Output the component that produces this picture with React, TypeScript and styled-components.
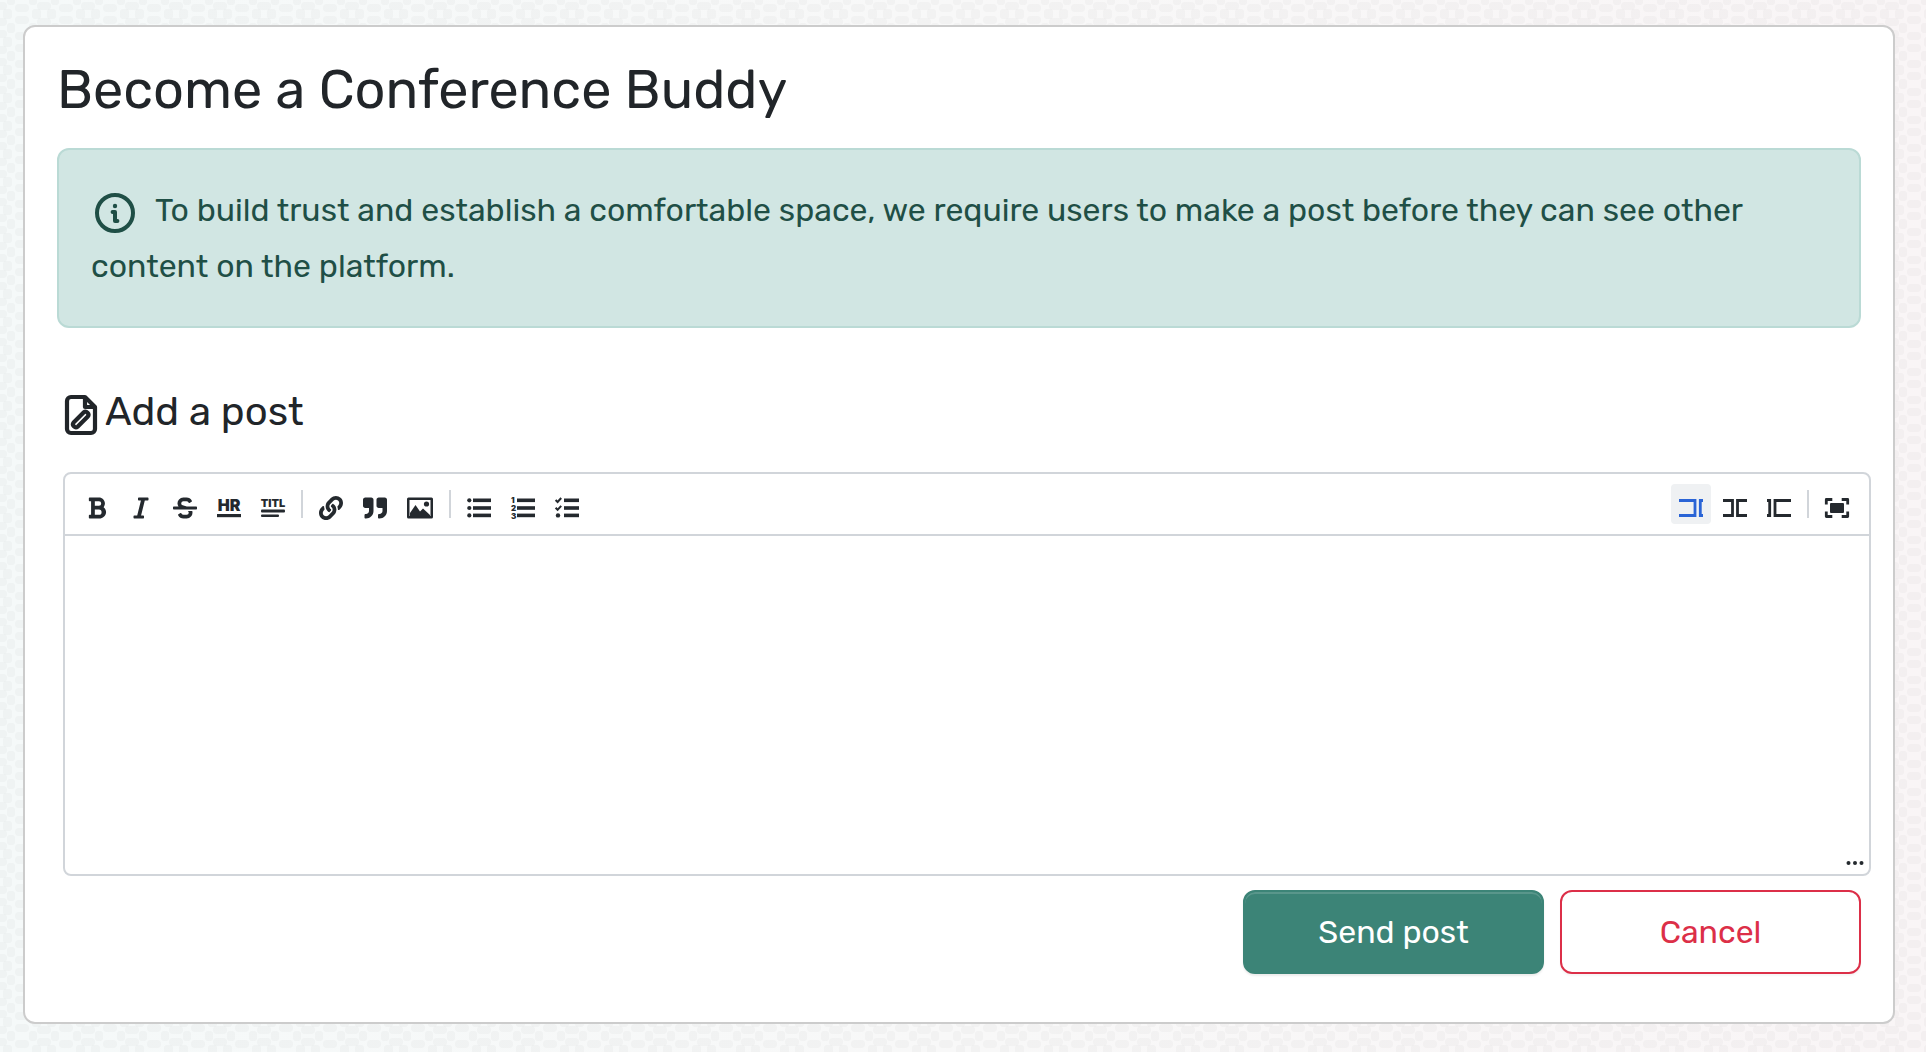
import React from "react";
import styled, { createGlobalStyle } from "styled-components";
import { FaBold, FaItalic, FaStrikethrough, FaLink, FaQuoteRight } from "react-icons/fa";

const ink = "#24292e";
const line = "#d1d5da";

const tile = encodeURIComponent(
  `<svg xmlns="http://www.w3.org/2000/svg" width="44" height="28" viewBox="0 0 44 28"><g fill="#302020" fill-opacity=".026"><rect x="15" y="4" width="14" height="8" rx="4"/><rect x="15" y="16" width="14" height="8" rx="4"/><rect x="-7" y="2" width="14" height="8" rx="4"/><rect x="37" y="2" width="14" height="8" rx="4"/><rect x="-7" y="18" width="14" height="8" rx="4"/><rect x="37" y="18" width="14" height="8" rx="4"/><rect x="3" y="9" width="9" height="10" rx="3"/><rect x="32" y="9" width="9" height="10" rx="3"/><rect x="7" y="-4" width="8" height="9" rx="3"/><rect x="7" y="23" width="8" height="9" rx="3"/><rect x="29" y="-4" width="8" height="9" rx="3"/><rect x="29" y="23" width="8" height="9" rx="3"/></g></svg>`
);

const GlobalStyle = createGlobalStyle`
  *, *::before, *::after { box-sizing: border-box; }
  body {
    margin: 0;
    min-height: 100vh;
    font-family: Rubik, Roboto, "Liberation Sans", sans-serif;
    color: #212529;
    background: url("data:image/svg+xml,${tile}"), linear-gradient(90deg, #f5f9f9, #f8f8f8 50%, #f9f5f6);
  }
  button, textarea { font: inherit; }
`;

const Card = styled.main`
  margin: 25px 31px 28px 23px;
  padding: 29px 32px 48px;
  background: #fff;
  border: 2px solid #ccc;
  border-radius: 12px;
`;

const Title = styled.h1`
  margin: 0 0 24px;
  font-size: 54px;
  line-height: 68px;
  font-weight: 400;
`;

const Notice = styled.p`
  margin: 0 0 56px;
  padding: 32px;
  font-size: 32px;
  line-height: 56px;
  color: #1f4f46;
  background: #d1e6e3;
  border: 2px solid #badad5;
  border-radius: 12px;
  svg { margin-right: 16px; }
`;

const Heading = styled.h2`
  margin: 0 0 32px;
  font-size: 40px;
  line-height: 56px;
  font-weight: 400;
`;

const InlineIcon = styled.svg`
  width: 48px;
  height: 48px;
  vertical-align: middle;
`;

const Editor = styled.section`
  position: relative;
  margin: 0 -10px 14px 6px;
  border: 2px solid ${line};
  border-radius: 8px;
`;

const Toolbar = styled.div`
  display: flex;
  justify-content: space-between;
  padding: 10px 12px;
  border-bottom: 2px solid ${line};
`;

const ToolGroup = styled.div`
  display: flex;
  align-items: center;
  gap: 4px;
`;

const Tool = styled.button<{ $active?: boolean }>`
  display: flex;
  align-items: center;
  justify-content: center;
  min-width: 40px;
  height: 40px;
  padding: 8px 8px 0;
  border: 0;
  border-radius: 4px;
  color: ${(p) => (p.$active ? "#2a64d6" : ink)};
  background: ${(p) => (p.$active ? "#eff1f3" : "transparent")};
  svg { display: block; flex: none; overflow: visible; }
`;

const Divider = styled.span`
  width: 2px;
  height: 28px;
  margin: 0 4px;
  background: ${line};
`;

const PostField = styled.textarea`
  display: block;
  width: 100%;
  height: 338px;
  padding: 16px;
  border: 0;
  border-radius: 0 0 8px 8px;
  outline: 0;
  resize: none;
  background: transparent;
  font-size: 28px;
`;

const ResizeGrip = styled.svg`
  position: absolute;
  right: 5px;
  bottom: 7px;
`;

const Actions = styled.div`
  display: flex;
  justify-content: flex-end;
  gap: 16px;
`;

const Action = styled.button<{ $primary?: boolean }>`
  width: 301px;
  height: 84px;
  padding: 0;
  font-size: 32px;
  line-height: 48px;
  border: 2px solid ${(p) => (p.$primary ? "#3c8477" : "#dc2f48")};
  border-radius: 12px;
  color: ${(p) => (p.$primary ? "#fff" : "#dc2f48")};
  background: ${(p) => (p.$primary ? "#3c8477" : "#fff")};
  box-shadow: ${(p) =>
    p.$primary
      ? "inset 0 2px 0 rgba(255,255,255,.15), 0 2px 2px rgba(0,0,0,.075)"
      : "0 2px 2px rgba(0,0,0,.04)"};
`;

const Glyph = ({ children, width = 24 }: { children: React.ReactNode; width?: number }) => (
  <svg width={width} height="24" viewBox={`0 0 ${width} 24`} fill="currentColor" aria-hidden="true">
    {children}
  </svg>
);

const Lines = () => (
  <>
    <rect x="6" y="2.5" width="18" height="3.6" />
    <rect x="6" y="10.2" width="18" height="3.6" />
    <rect x="6" y="17.6" width="18" height="3.6" />
  </>
);

const digit = { fontFamily: "Inter, Roboto, sans-serif", fontWeight: 900, fontSize: 8 };
const label = { fontFamily: "Inter, Roboto, sans-serif", fontWeight: 900 };

const leftTools: ({ name: string; icon: React.ReactNode } | null)[] = [
  { name: "Bold", icon: <FaBold size={24} /> },
  { name: "Italic", icon: <FaItalic size={24} /> },
  { name: "Strikethrough", icon: <FaStrikethrough size={24} /> },
  {
    name: "Horizontal rule",
    icon: (
      <Glyph>
        <text x="12" y="15" textAnchor="middle" fontSize="16" {...label}>HR</text>
        <rect y="18" width="24" height="3.2" />
      </Glyph>
    ),
  },
  {
    name: "Title",
    icon: (
      <Glyph>
        <text x="12" y="11" textAnchor="middle" fontSize="11" {...label}>TITL</text>
        <rect y="13.6" width="24" height="2.8" rx="1" />
        <rect y="18.6" width="18" height="2.4" rx="1" />
      </Glyph>
    ),
  },
  null,
  { name: "Link", icon: <FaLink size={24} /> },
  { name: "Quote", icon: <FaQuoteRight size={24} /> },
  {
    name: "Image",
    icon: (
      <Glyph width={26}>
        <path fillRule="evenodd" d="M1.5 1.5h23A1.5 1.5 0 0 1 26 3v18a1.5 1.5 0 0 1-1.5 1.5h-23A1.5 1.5 0 0 1 0 21V3a1.5 1.5 0 0 1 1.5-1.5ZM2.5 4v16h21V4Z" />
        <path d="M3 20v-3L8.500 9l4.500 6.500 3-3L23 19v1Z" />
        <circle cx="19.5" cy="8" r="2.6" />
      </Glyph>
    ),
  },
  null,
  {
    name: "Bulleted list",
    icon: (
      <Glyph>
        <circle cx="2.3" cy="4.3" r="2.1" />
        <circle cx="2.3" cy="12" r="2.1" />
        <circle cx="2.3" cy="19.4" r="2.1" />
        <Lines />
      </Glyph>
    ),
  },
  {
    name: "Numbered list",
    icon: (
      <Glyph>
        <text x="0" y="7" {...digit}>1</text>
        <text x="0" y="15" {...digit}>2</text>
        <text x="0" y="23" {...digit}>3</text>
        <Lines />
      </Glyph>
    ),
  },
  {
    name: "Task list",
    icon: (
      <Glyph>
        <path d="m.6 4 2 2 3.600-4M.6 11.800l2 2 3.600-4" fill="none" stroke="currentColor" strokeWidth="2" />
        <circle cx="3" cy="19.4" r="2.2" />
        <rect x="9" y="2.5" width="15" height="3.6" />
        <rect x="9" y="10.2" width="15" height="3.6" />
        <rect x="9" y="17.6" width="15" height="3.6" />
      </Glyph>
    ),
  },
];

const Pane = ({ d }: { d: string }) => (
  <svg width="24" height="24" viewBox="0 0 24 24" fill="none" stroke="currentColor" strokeWidth="2.8" aria-hidden="true">
    <path d={d} />
  </svg>
);

const viewTools: ({ name: string; icon: React.ReactNode; active?: boolean } | null)[] = [
  { name: "Edit only", active: true, icon: <Pane d="M0 4.500h16v15H0M24 4.500h-2.700v15H24" /> },
  { name: "Edit and preview", icon: <Pane d="M0 4.500h9.500v15H0M24 4.500h-9.500v15H24" /> },
  { name: "Preview only", icon: <Pane d="M0 4.500h2.700v15H0M24 4.500H8v15h16" /> },
  null,
  {
    name: "Full screen",
    icon: (
      <Glyph>
        <rect x="5" y="7" width="14" height="10" rx="1" />
        <path
          d="M1.300 8.500V3.500h6M16.700 3.500h6v5M22.700 15.500v5h-6M7.300 20.500h-6v-5"
          fill="none"
          stroke="currentColor"
          strokeWidth="2.8"
          strokeLinejoin="round"
        />
      </Glyph>
    ),
  },
];

const Tools = ({ items }: { items: ({ name: string; icon: React.ReactNode; active?: boolean } | null)[] }) => (
  <ToolGroup>
    {items.map((t, i) =>
      t ? (
        <Tool key={t.name} type="button" aria-label={t.name} $active={t.active}>
          {t.icon}
        </Tool>
      ) : (
        <Divider key={i} />
      )
    )}
  </ToolGroup>
);

export default function App() {
  return (
    <>
      <GlobalStyle />
      <Card>
        <Title>Become a Conference Buddy</Title>
        <Notice>
          <InlineIcon viewBox="0 0 24 24" fill="none" stroke="currentColor" aria-hidden="true">
            <circle cx="12" cy="12" r="9" strokeWidth="2" />
            <circle cx="12" cy="8.5" r="1.1" fill="currentColor" stroke="none" />
            <path d="M10.800 11.500h1.200v4.500h1.200" strokeWidth="2" strokeLinecap="round" strokeLinejoin="round" />
          </InlineIcon>
          To build trust and establish a comfortable space, we require users to make a post before they can see other
          content on the platform.
        </Notice>
        <Heading>
          <InlineIcon viewBox="0 0 24 24" fill="none" stroke="currentColor" strokeWidth="2.1" strokeLinejoin="round" aria-hidden="true">
            <path d="M7 3h7l5 5v11a2 2 0 0 1-2 2H7a2 2 0 0 1-2-2V5a2 2 0 0 1 2-2Z" />
            <path d="M14 3v5h5" />
            <path d="M8.300 15.700a1.500 1.500 0 0 0 2.100 2.100l5-5a1.500 1.500 0 0 0-2.100-2.100Z" />
          </InlineIcon>
          Add a post
        </Heading>
        <Editor>
          <Toolbar>
            <Tools items={leftTools} />
            <Tools items={viewTools} />
          </Toolbar>
          <PostField aria-label="Add a post" />
          <ResizeGrip width="18" height="8" viewBox="0 0 18 8" fill={ink} aria-hidden="true">
            <circle cx="2.5" cy="4" r="2" />
            <circle cx="9" cy="4" r="2" />
            <circle cx="15.5" cy="4" r="2" />
          </ResizeGrip>
        </Editor>
        <Actions>
          <Action type="button" $primary>Send post</Action>
          <Action type="button">Cancel</Action>
        </Actions>
      </Card>
    </>
  );
}
